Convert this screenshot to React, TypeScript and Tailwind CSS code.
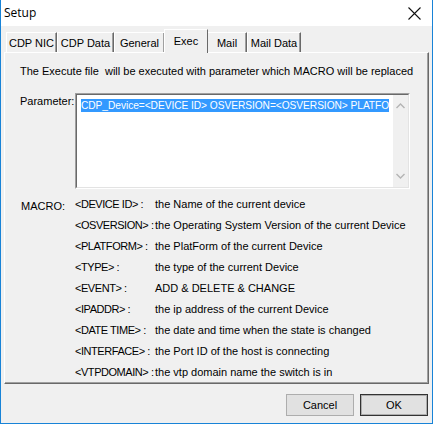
import React from 'react'

const tabs = [
  { label: 'CDP NIC', w: 'w-[51px]' },
  { label: 'CDP Data', w: 'w-[57px]' },
  { label: 'General', w: 'w-[51px]' },
  { label: 'Exec', w: 'w-[44px]', active: true },
  { label: 'Mail', w: 'w-[40px]' },
  { label: 'Mail Data', w: 'w-[54px]' },
]

const macros = [
  ['<DEVICE ID> :', 'the Name of the current device'],
  ['<OSVERSION> :', 'the Operating System Version of the current Device'],
  ['<PLATFORM> :', 'the PlatForm of the current Device'],
  ['<TYPE> :', 'the type of the current Device'],
  ['<EVENT> :', 'ADD & DELETE & CHANGE'],
  ['<IPADDR> :', 'the ip address of the current Device'],
  ['<DATE TIME> :', 'the date and time when the state is changed'],
  ['<INTERFACE> :', 'the Port ID of the host is connecting'],
  ['<VTPDOMAIN> :', 'the vtp domain name the switch is in'],
]

function Chevron({ up }: { up?: boolean }) {
  return (
    <svg width="9" height="6" viewBox="0 0 9 6" className="block">
      <path d={up ? 'M0.5 5 L4.5 1 L8.5 5' : 'M0.5 1 L4.5 5 L8.5 1'} fill="none" stroke="#b4b4b4" strokeWidth="1.4" />
    </svg>
  )
}

export default function App() {
  return (
    <div className="w-[433px] h-[424px] bg-[#f0f0f0] border-x border-b border-[#1883d7] flex flex-col font-['Liberation_Sans',Arial,sans-serif] text-[11px] text-black overflow-hidden">
      {/* Title bar */}
      <div className="h-[26px] bg-white flex items-center justify-between pl-[3px] pr-[11px]">
        <span className="text-[12px] font-['Open_Sans','Noto_Sans',sans-serif] text-black">Setup</span>
        <svg width="13" height="13" viewBox="0 0 13 13">
          <path d="M0.5 0.5 L12.5 12.5 M12.5 0.5 L0.5 12.5" stroke="#111" strokeWidth="1.1" />
        </svg>
      </div>

      <div className="px-[3px] flex flex-col flex-1">
        {/* Tabs */}
        <div className="h-[26px] flex items-end pl-[2px]">
          {tabs.map((t) =>
            t.active ? (
              <div
                key={t.label}
                className={`${t.w} h-[24px] -mb-px relative z-10 bg-[#f0f0f0] border-t border-l border-white border-r border-r-[#696969] flex items-start justify-center pt-[3px] -mx-px`}
              >
                {t.label}
              </div>
            ) : (
              <div
                key={t.label}
                className={`${t.w} h-[20px] bg-[#f0f0f0] border-t border-l border-white border-r border-r-[#696969] shadow-[inset_-1px_0_0_#a0a0a0] flex items-center justify-center pt-[2px]`}
              >
                {t.label}
              </div>
            ),
          )}
        </div>

        {/* Panel */}
        <div className="h-[332px] border-t border-l border-white border-r border-b border-r-[#696969] border-b-[#696969] shadow-[inset_-1px_-1px_0_#a0a0a0] pl-[15px] pt-[12px]">
          <p className="leading-[13px]">The Execute file&nbsp; will be executed with parameter which MACRO will be replaced</p>

          <div className="flex mt-[15px]">
            <div className="w-[55px] pt-[2px] leading-[13px]">Parameter:</div>
            <div className="w-[335px] h-[96px] border-t border-l border-[#a0a0a0] border-r border-b border-r-white border-b-white flex">
              <div className="flex-1 flex border-t border-l border-[#696969] border-r border-b border-r-[#e3e3e3] border-b-[#e3e3e3] bg-white">
                <div className="flex-1 pl-[4px] pt-[2px]">
                  <span className="inline-block whitespace-nowrap bg-[#3399ff] text-white leading-[13px] text-[10.2px] tracking-[-0.05px]">
                    CDP_Device=&lt;DEVICE ID&gt; OSVERSION=&lt;OSVERSION&gt; PLATFO
                  </span>
                </div>
                <div className="w-[15px] bg-[#f0f0f0] flex flex-col items-center justify-between py-[8px]">
                  <Chevron up />
                  <Chevron />
                </div>
              </div>
            </div>
          </div>

          <div className="flex mt-[9px]">
            <div className="w-[55px] pl-px">MACRO:</div>
            <div className="flex flex-col">
              {macros.map(([k, v]) => (
                <div key={k} className="flex h-[21px] leading-[13px]">
                  <span className="w-[80px] whitespace-nowrap tracking-[-0.45px]">{k}</span>
                  <span className="whitespace-nowrap">{v}</span>
                </div>
              ))}
            </div>
          </div>
        </div>

        {/* Buttons */}
        <div className="flex justify-end gap-[6px] mt-[10px] pr-[1px]">
          <button className="w-[68px] h-[22px] bg-[#e1e1e1] border border-[#adadad] text-[11px]">Cancel</button>
          <button className="w-[68px] h-[22px] bg-[#e1e1e1] border border-[#333] shadow-[inset_0_0_0_1px_#adadad] text-[11px]">OK</button>
        </div>
      </div>
    </div>
  )
}
